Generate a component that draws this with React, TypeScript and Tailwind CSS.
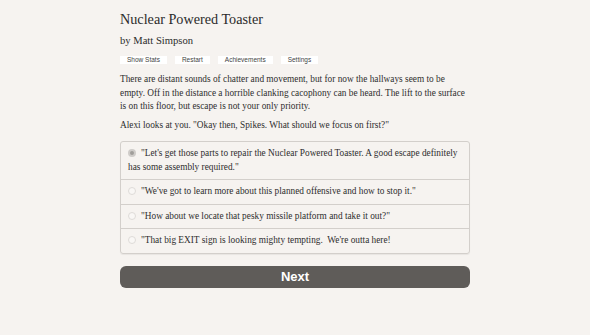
import { useState } from "react"

const choices = [
  "\"Let's get those parts to repair the Nuclear Powered Toaster. A good escape definitely has some assembly required.\"",
  "\"We've got to learn more about this planned offensive and how to stop it.\"",
  "\"How about we locate that pesky missile platform and take it out?\"",
  "\"That big EXIT sign is looking mighty tempting.  We're outta here!",
]

const menu = ["Show Stats", "Restart", "Achievements", "Settings"]

export default function App() {
  const [selected, setSelected] = useState(0)

  return (
    <div className="min-h-[335px] w-full bg-[#f6f3f0] text-[#333] overflow-hidden">
      <div className="w-[350px] ml-[120px] pt-[9px] font-['Liberation_Serif',serif]">
        {/* Header */}
        <h1 className="text-[14.2px] leading-[20px] text-[#2b2b2b]">Nuclear Powered Toaster</h1>
        <p className="mt-[5px] text-[10.6px] leading-[14px] text-[#2b2b2b]">by Matt Simpson</p>

        <div className="mt-[8px] flex gap-[8px] font-['Liberation_Sans',sans-serif]">
          {menu.map((item) => (
            <button
              key={item}
              className="h-[8px] px-[7px] bg-white text-[6.5px] leading-[8px] text-[#444] whitespace-pre"
            >
              {item}
            </button>
          ))}
        </div>

        {/* Story */}
        <p className="mt-[9px] text-[9.3px] leading-[13.5px] text-[#2e2e2e]">
          There are distant sounds of chatter and movement, but for now the hallways seem to be empty. Off in the
          distance a horrible clanking cacophony can be heard. The lift to the surface is on this floor, but escape is
          not your only priority.
        </p>
        <p className="mt-[5px] text-[9.3px] leading-[13.5px] text-[#2e2e2e]">
          Alexi looks at you. "Okay then, Spikes. What should we focus on first?"
        </p>

        {/* Choices */}
        <div className="mt-[9px] border border-[#d3cfcb] rounded-[3px] shadow-[0_1px_1px_rgba(0,0,0,0.06)]">
          {choices.map((c, i) => (
            <div
              key={i}
              onClick={() => setSelected(i)}
              className={`px-[7px] pt-[5px] pb-[5px] text-[9.3px] leading-[13.5px] text-[#2e2e2e] whitespace-pre-wrap ${
                i > 0 ? "border-t border-[#d3cfcb]" : ""
              }`}
            >
              <span
                className={`inline-block align-[-1px] w-[8px] h-[8px] rounded-full mr-[5px] ${
                  selected === i ? "bg-[#a09d9a] border-[2px] border-[#cfccc9]" : "border border-[#dedbd8] bg-[#f9f7f5]"
                }`}
              />
              {c}
            </div>
          ))}
        </div>

        {/* Next */}
        <button className="mt-[12px] w-full h-[22px] rounded-[6px] bg-[#5f5c59] text-white text-[13px] font-bold font-['Liberation_Sans',sans-serif]">
          Next
        </button>
      </div>
    </div>
  )
}
